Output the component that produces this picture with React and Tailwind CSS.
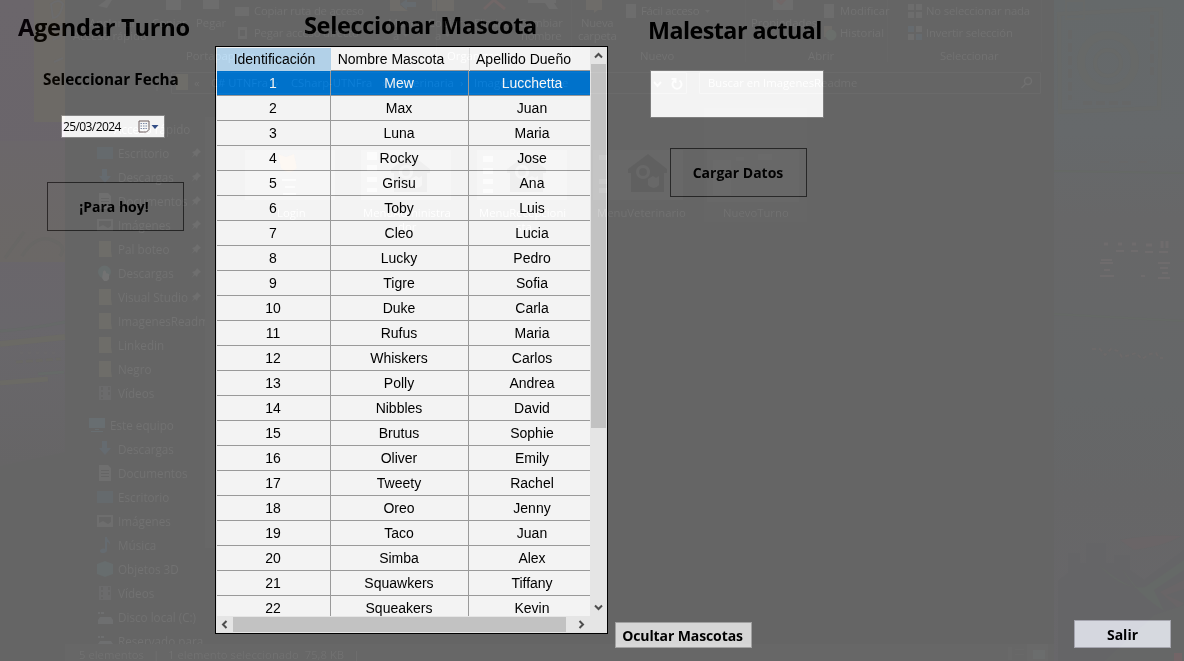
import React from "react";

const pets = [
  ["Mew", "Lucchetta"], ["Max", "Juan"], ["Luna", "Maria"], ["Rocky", "Jose"],
  ["Grisu", "Ana"], ["Toby", "Luis"], ["Cleo", "Lucia"], ["Lucky", "Pedro"],
  ["Tigre", "Sofia"], ["Duke", "Carla"], ["Rufus", "Maria"], ["Whiskers", "Carlos"],
  ["Polly", "Andrea"], ["Nibbles", "David"], ["Brutus", "Sophie"], ["Oliver", "Emily"],
  ["Tweety", "Rachel"], ["Oreo", "Jenny"], ["Taco", "Juan"], ["Simba", "Alex"],
  ["Squawkers", "Tiffany"], ["Squeakers", "Kevin"],
];

const quick = [
  ["Escritorio", "desktop", true], ["Descargas", "down", true], ["Documentos", "doc", true],
  ["Imágenes", "image", true], ["Pal boteo", "folder", true], ["Descargas", "globe", true],
  ["Visual Studio", "folder", true], ["ImagenesReadm", "folder"], ["Linkedin", "folder"],
  ["Negro", "folder"], ["Vídeos", "film"],
];

const computer = [
  ["Descargas", "down"], ["Documentos", "doc"], ["Escritorio", "desktop"], ["Imágenes", "image"],
  ["Música", "music"], ["Objetos 3D", "cube"], ["Vídeos", "film"], ["Disco local (C:)", "disk"],
  ["Reservado para e", "disk"],
];

function Glyph({ kind }) {
  return (
    <svg width="16" height="16" viewBox="0 0 16 16" className="shrink-0">
      {kind === "desktop" && <path d="M0 2h16v12H0z" fill="#000508" />}
      {kind === "down" && <path d="M5 0h5v7h4l-6 7-6-7h3z" fill="#00060b" />}
      {kind === "doc" && <path d="M2 0h9l3 3v13H2zM4 5v1h8V5zM4 8v1h8V8zM4 11v1h8v-1z" fill="#0a0a0a" fillRule="evenodd" />}
      {kind === "image" && <path d="M0 2h16v12H0zM2 4v6l4-2 5 3 3-2V4z" fill="#090909" fillRule="evenodd" />}
      {kind === "folder" && <path d="M2 0h12v10l1 6H2z" fill="#090804" />}
      {kind === "globe" && (
        <g>
          <circle cx="7.500" cy="7" r="6.500" fill="#020808" />
          <path d="M6 7c0-2 3-2 3 0v1l3 1v5l-2 2H7l-2-3z" fill="#0e0e0e" />
        </g>
      )}
      {kind === "film" && <path d="M2 1h12v14H2zM4 2v3h2V2zM4 7v3h2V7zM4 12v2h2v-2zM11 2v3h2V2zM11 7v3h2V7z" fill="#060607" fillRule="evenodd" />}
      {kind === "music" && <path d="M8 0h2c0 3 4 4 3 8-1-3-3-3-3-3v8c0 4-7 4-7 1 0-2 3-3 5-2z" fill="#00060b" />}
      {kind === "cube" && <path d="M0 3l8-3 8 3v10l-8 3-8-3z" fill="#020809" />}
      {kind === "disk" && <path d="M3 8h11l2 3v4H1v-4zM1 3h2v2H1zM4 3h3v2H4z" fill="#090a0b" />}
      {kind === "pc" && <path d="M0 1h16v10H0zM6 12h4v1H6zM2 14h12v1H2z" fill="#03090c" />}
    </svg>
  );
}

function Pin() {
  return (
    <svg width="10" height="10" viewBox="0 0 10 10" className="absolute left-[94px] top-[7px]">
      <path d="M6 0l4 4-1 .5L7 6 6 9 4 7 .5 10 3 6 1 4l3-1 1.500-2z" fill="#0a0a0a" />
    </svg>
  );
}

function SideRow({ item }) {
  return (
    <div className="relative flex h-6 shrink-0 items-center gap-[5px]">
      <Glyph kind={item[1]} />
      <span className="whitespace-nowrap">{item[0]}</span>
      {item[2] && <Pin />}
    </div>
  );
}

function Wallpaper() {
  return (
    <svg width="1184" height="661" className="absolute inset-0">
      <defs>
        <linearGradient id="fadeLeft" x1="0" y1="0" x2="0" y2="1">
          <stop offset="0" stopColor="#060106" />
          <stop offset="0.400" stopColor="#050006" />
          <stop offset="0.700" stopColor="#040206" />
          <stop offset="1" stopColor="#010001" />
        </linearGradient>
        <linearGradient id="fadeRight" x1="0" y1="0" x2="0" y2="1">
          <stop offset="0" stopColor="#000405" />
          <stop offset="0.200" stopColor="#010406" />
          <stop offset="0.330" stopColor="#020203" />
          <stop offset="0.600" stopColor="#000203" />
          <stop offset="0.750" stopColor="#010102" />
          <stop offset="1" stopColor="#030205" />
        </linearGradient>
        <linearGradient id="brown" x1="0" y1="0" x2="0" y2="1">
          <stop offset="0" stopColor="#060205" />
          <stop offset="1" stopColor="#060301" />
        </linearGradient>
        <filter id="soft" x="-10%" y="-50%" width="120%" height="200%"><feGaussianBlur stdDeviation="0.800" /></filter>
      </defs>
      <path d="M0 0h34v122h31v19H0zM0 262h65v190L0 466z" fill="url(#fadeLeft)" />
      <path d="M34 0h31v122H34z" fill="#080501" />
      <path d="M0 141h65v121H0z" fill="url(#brown)" />
      <g fill="none" strokeWidth="3">
        <path d="M51 4q8-6 12 0-3 14-10 14zM54 30l9-4M53 40l9-5M54 62l9-4" stroke="#070708" strokeWidth="2" />
        <path d="M0 331q30-2 65-9" stroke="#010403" />
        <path d="M0 344l65-7" stroke="#060500" strokeWidth="6" />
        <path d="M20 353h35" strokeDasharray="3 5" stroke="#050305" />
        <path d="M16 362l45-3" strokeDasharray="7 3" stroke="#040300" />
        <path d="M0 383l48-4" stroke="#060500" strokeWidth="5" />
        <path d="M38 374l26-2" stroke="#010503" />
        <path d="M5 258L24 232M22 256q14-22 30-16t8 16" stroke="#030200" />
      </g>
      <path d="M1054 0h130v661h-130z" fill="url(#fadeRight)" />
      <g fill="none" stroke="#020403">
        <path d="M1059 14l102-5-2 99-99 4z" strokeWidth="4" />
        <circle cx="1108" cy="62" r="27" strokeWidth="8" />
        <circle cx="1108" cy="63" r="13" strokeWidth="4" />
        <path d="M1070 30v70M1152 15v60M1083 103h50" strokeWidth="4" strokeDasharray="9 4" stroke="#010202" />
        <path d="M1066 1h18v18h-18z" strokeWidth="2" />
        <path d="M1054 171l130 2M1054 314l130 7" stroke="#000401" strokeWidth="2" />
        <path d="M1100 162h58" strokeDasharray="9 10" stroke="#040202" />
      </g>
      <g stroke="#0a0708" strokeWidth="2" fill="none">
        <path d="M1104 244h4M1118 244h4M1132 244h4M1146 245h6M1162 241v7M1167 241v7" strokeWidth="3" />
        <path d="M1116 251h8M1131 251h7M1145 252h8M1159 252h9M1101 260h11M1100 263h13M1104 270h6M1100 276h14M1158 263h12M1160 268h8M1162 273h6M1158 278h12M1141 276h4" />
        <path d="M1092 349h8l5 6 6-6 7 2 4 6 8-2 6-2 6 6 8-5 6-1 3 5h4" strokeDasharray="4 3" stroke="#070404" />
      </g>
      <path d="M1058 661v-80l10-8v-20h12v10h6v-20h20v20h8v-8h16v15l14 10 40-30v121z" fill="#000002" />
      <path d="M1099 565q24 26 46 22l39-27v10l-30 20 10 21q-28-18-42-42l16 20q-18-6-39-24z" fill="#000402" />
      <path d="M1120 540q30-6 62-4-18 10-48 14z" fill="#050002" />
      <path d="M1160 592l24-12v9l-18 6 18 8-5 6z" fill="#040002" />
      <path d="M1104 661l50-46 30-10v56z" fill="#010202" />
      <path d="M1174 653h8v8h-8z" fill="#0e0002" />
    </svg>
  );
}

function RibbonIcons() {
  return (
    <svg width="1184" height="225" className="absolute inset-0">
      <g fill="#080808">
        <path d="M98 6l8-6h6l-5 8zM166 0h15v10h-15zM203 0h16v9h-16z" />
        <path d="M235 7h14v9h-14z" />
        <path d="M238 27h9v12h-9zM240 30v6h5v-6z" fillRule="evenodd" />
        <path d="M626 4h10v14h-10zM705 10h5l-2.500 3zM773 0h20v10h-20zM824 4h10v14h-10z" />
        <path d="M528 0h28v3h-28zM545 3h9l4 6h-9z" />
        <path d="M908 4h6v6h-6zM916 4h6v6h-6zM908 12h6v6h-6zM916 12h6v6h-6z" />
        <path d="M403 34h5l-2.500 3zM445 34h5l-2.500 3z" />
      </g>
      <path d="M390 0h10v5l8 6h-18zM432 0h22v11h-22zM586 0h16v10h-4l-4 3v-3h-8zM824 26h8v11h-8z" fill="#090704" />
      <g fill="#01060a"><path d="M908 26h6v6h-6zM916 34h6v6h-6zM400 4l7-5v3h9v5h-9v3z" /></g>
      <path d="M916 26h6v6h-6zM908 34h6v6h-6z" fill="#090909" />
      <circle cx="831" cy="35" r="5.500" fill="#050906" />
      <path d="M484 9L494 0l11 9M777 0l4 3 5-5" stroke="#0c0202" strokeWidth="3" fill="none" />
      <path d="M176 74h12v16h-12z" fill="#090804" />
      <g fill="none" stroke="#050505">
        <path d="M171.500 72.500h515v21h-515zM699.500 72.500h341v21h-341z" />
        <path d="M436.500 0v62M571.500 0v62M745.500 0v62M887.500 0v62M1041.500 0v62" stroke="#020202" />
        <g stroke="#0b0b0b" strokeWidth="1.500">
          <path d="M86 79l-5 5 5 5M157 91V79l-4 4m4-4l4 4" stroke="#060606" />
          <path d="M654 82l3.500 4 3.500-4M679.500 80.500a4.500 4.500 0 1 1-5 0M675.500 83v-4h-4" strokeWidth="2" />
          <circle cx="1028" cy="81" r="3.500" />
          <path d="M1025.500 84l-4 4" />
        </g>
      </g>
      <g fill="#090909">
        <path d="M245 150h90v50h-90zM361 150h90v50h-90zM477 150h90v50h-90z" opacity="0.300" />
        <path d="M282 179h14v2h-14zM285 186h10v2h-10zM283 193h13v2h-13zM367 152h10v8h-10zM367 165h10v6h-10zM367 177h10v5h-10zM367 188h10v4h-10zM483 156h10v6h-10zM483 168h10v6h-10zM483 179h10v5h-10zM483 189h10v4h-10zM599 155h8v5h-8zM599 179h8v5h-8zM599 188h8v5h-8z" />
        <path d="M281 168l-3-14 8 3 8-3 3 14q-8 8-16 0z" fill="#0a0500" />
        <path d="M593 150h90v50h-90zM707 150h92v52h-92z" opacity="0.300" />
        <path d="M704 108h103v114H704z" opacity="0.120" />
        <path d="M713 160h18v35h-18zM736 157h8v4h-8zM758 154h14v6h-14z" opacity="0.400" />
      </g>
    </svg>
  );
}

/* Thumbnails with a house and two pets, darker than what surrounds them */
function Houses() {
  return (
    <svg width="320" height="46" viewBox="0 0 320 46" className="pointer-events-none absolute left-[390px] top-[150px]">
      {[21, 137, 258].map((x, i) => (
        <g key={i} transform={"translate(" + (x - 20) + " 0)"} opacity={i === 2 ? 0.07 : 0.025}>
          <path
            d="M20 4L39 19v4h-3v19H3V23H0v-4zM15 15a7 7 0 1 0 .1 0zM25 26l3 2 3-2v9q-5 6-11 0v-6z"
            fill="#000"
            fillRule="evenodd"
          />
          <circle cx="15" cy="22" r="4" fill="#000" />
        </g>
      ))}
    </svg>
  );
}

function G({ at, children }) {
  return <span className={"absolute whitespace-pre " + at}>{children}</span>;
}

/* Light of the desktop and file explorer that shows through the translucent form */
function Backdrop() {
  return (
    <div className="pointer-events-none absolute inset-0 overflow-hidden mix-blend-plus-lighter bg-black font-['Open_Sans','Noto_Sans',sans-serif] text-[11.3px] leading-[16px] text-[#0d0d0d]">
      <Wallpaper />
      <RibbonIcons />
      <G at="left-[89px] top-[15px]">Anclar al</G>
      <G at="left-[73px] top-[28px]">Acceso rápido</G>
      <G at="left-[152px] top-[15px]">Copiar</G>
      <G at="left-[196px] top-[15px]">Pegar</G>
      <G at="left-[254px] top-[3px] tracking-[-0.2px]">Copiar ruta de acceso</G>
      <G at="left-[254px] top-[25px] tracking-[-0.2px]">Pegar acceso directo</G>
      <G at="left-[186px] top-[48px]">Portapapeles</G>
      <G at="left-[388px] top-[15px]">Mover</G>
      <G at="left-[393px] top-[28px]">a</G>
      <G at="left-[428px] top-[15px]">Copiar</G>
      <G at="left-[435px] top-[28px]">a</G>
      <G at="left-[474px] top-[15px] tracking-[-0.3px]">Eliminar</G>
      <G at="left-[519px] top-[15px] tracking-[-0.1px]">Cambiar</G>
      <G at="left-[521px] top-[28px] tracking-[-0.3px]">nombre</G>
      <G at="left-[447px] top-[48px]">Organizar</G>
      <G at="left-[581px] top-[15px] tracking-[-0.3px]">Nueva</G>
      <G at="left-[578px] top-[28px] tracking-[-0.2px]">carpeta</G>
      <G at="left-[641px] top-[3px] tracking-[-0.3px]">Fácil acceso</G>
      <G at="left-[640px] top-[48px]">Nuevo</G>
      <G at="left-[751px] top-[15px]">Propiedades</G>
      <G at="left-[840px] top-[3px]">Modificar</G>
      <G at="left-[840px] top-[25px]">Historial</G>
      <G at="left-[808px] top-[48px]">Abrir</G>
      <G at="left-[926px] top-[3px] tracking-[-0.15px]">No seleccionar nada</G>
      <G at="left-[926px] top-[25px] tracking-[-0.15px]">Invertir selección</G>
      <G at="left-[940px] top-[48px] tracking-[-0.15px]">Seleccionar</G>
      <G at="left-[194px] top-[75px]">{"«"}</G>
      <G at="left-[211px] top-[75px]">C# UTNFra</G>
      <G at="left-[275px] top-[75px]">{"›"}</G>
      <G at="left-[291px] top-[75px]">CSharp-UTNFra</G>
      <G at="left-[382px] top-[75px]">{"›"}</G>
      <G at="left-[396px] top-[75px]">Veterinaria</G>
      <G at="left-[460px] top-[75px]">{"›"}</G>
      <G at="left-[474px] top-[75px]">ImagenesReadme</G>
      <G at="left-[708px] top-[75px]">Buscar en ImagenesReadme</G>
      <G at="left-[277px] top-[205px]">Login</G>
      <G at="left-[363px] top-[205px]">MenuAdministra</G>
      <G at="left-[398px] top-[219px]">dor</G>
      <G at="left-[479px] top-[205px]">MenuRecepcioni</G>
      <G at="left-[516px] top-[219px]">sta</G>
      <G at="left-[597px] top-[205px]">MenuVeterinario</G>
      <G at="left-[723px] top-[205px]">NuevoTurno</G>
      <div className="absolute left-[205px] top-[117px] h-[431px] w-[11px] bg-[#020202]" />
      <div className="absolute left-[65px] top-[117px] flex h-[527px] w-[140px] flex-col overflow-hidden text-[11.7px]">
        <div className="flex h-6 shrink-0 items-center pl-[49px]">Acceso rápido</div>
        <div className="pl-8">
          {quick.map((q, i) => <SideRow key={i} item={q} />)}
        </div>
        <div className="mt-2 flex h-6 shrink-0 items-center gap-[5px] pl-6">
          <Glyph kind="pc" />Este equipo
        </div>
        <div className="pl-8">
          {computer.map((q, i) => <SideRow key={i} item={q} />)}
        </div>
      </div>
      <div className="absolute left-[65px] top-[644px] flex h-[17px] w-[989px] gap-[9px] bg-[#020202] pl-[14px] pt-[3px]">
        <span>5 elementos</span><span>|</span><span>1 elemento seleccionado&nbsp; 75,8 KB</span><span>|</span>
      </div>
      <svg width="40" height="18" className="absolute left-[1008px] top-[643px]">
        <path d="M0 4h4v13H0zM7 6h9v1H7zM7 11h9v1H7zM19 1h21v17H19z" fill="#040404" />
        <path d="M25 7h12v9H25z" fill="#060808" />
      </svg>
    </div>
  );
}

function Arrow({ d }) {
  return (
    <svg width="9" height="9" viewBox="0 0 9 9">
      <path d={d} fill="none" stroke="#4d4d4d" strokeWidth="2" />
    </svg>
  );
}

function PetTable() {
  return (
    <div className="flex h-[588px] w-[393px] flex-col border border-black bg-[#e5e5e5]">
      <div className="flex h-[569px] pl-px">
        <div className="h-[569px] w-[373px] overflow-hidden bg-[#f3f3f3] text-[14px] text-black">
          <div className="grid h-6 grid-cols-[114px_138px_121px] border-b border-[#999] pt-px text-center leading-[23px]">
            <div className="bg-[#b2d1e8] pl-px">Identificación</div>
            <div className="pr-[18px]">Nombre Mascota</div>
            <div className="border-l border-[#dcdcdc] pr-[13px]">Apellido Dueño</div>
          </div>
          {pets.map((p, i) => (
            <div
              key={i}
              className={
                "grid h-[25px] grid-cols-[114px_138px_121px] border-b border-[#999] text-center leading-[25px] " +
                (i === 0 ? "bg-[#0072cb] text-[#f2f2f2]" : "")
              }
            >
              <div className="border-r border-[#999] pr-px">{i + 1}</div>
              <div className="border-r border-[#999] pr-px">{p[0]}</div>
              <div className="pl-[5px]">{p[1]}</div>
            </div>
          ))}
        </div>
        <div className="flex h-[569px] w-4 flex-col items-center">
          <div className="flex h-[17px] items-center"><Arrow d="M1 6.500L4.500 3 8 6.500" /></div>
          <div className="h-[364px] w-[15px] bg-[#c2c2c2]" />
          <div className="flex-1" />
          <div className="flex h-[17px] items-center"><Arrow d="M1 2.500L4.500 6 8 2.500" /></div>
        </div>
      </div>
      <div className="flex h-[17px] items-center">
        <div className="flex w-[17px] justify-center"><Arrow d="M6.500 1L3 4.500 6.500 8" /></div>
        <div className="h-[15px] w-[333px] bg-[#c2c2c2]" />
        <div className="flex w-[31px] justify-center"><Arrow d="M2.500 1L6 4.500 2.500 8" /></div>
      </div>
    </div>
  );
}

export default function App() {
  return (
    <div className="relative isolate flex h-[661px] w-[1184px] overflow-hidden bg-[#656565] font-['Liberation_Sans',sans-serif] text-black">
      <section className="flex w-[215px] flex-col font-['Open_Sans','Noto_Sans',sans-serif] font-bold">
        <h1 className="mt-3 whitespace-nowrap pl-[18px] text-[23.6px] leading-[30px] tracking-[-0.25px]">Agendar Turno</h1>
        <h2 className="mt-[27px] whitespace-nowrap pl-[43px] text-[15.3px] leading-[20px]">Seleccionar Fecha</h2>
        <div className="ml-[61px] mt-[26px] flex h-[23px] w-[104px] items-center border border-[#858585] bg-[#f3f3f3] pl-px font-normal">
          <span className="w-[75px] text-[12px] tracking-[-0.6px]">25/03/2024</span>
          <svg width="22" height="14" viewBox="0 0 22 14">
            <path d="M1 1h10v8.500L8.500 12H1z" fill="#f4f4f4" stroke="#6c5d5d" />
            <path d="M2.500 3.500h7M2.500 6h7M2.500 8.500h7" stroke="#7e8ba8" strokeDasharray="1.500 1" />
            <path d="M13.500 5h7L17 9z" fill="#344f87" />
          </svg>
        </div>
        <button className="ml-[47px] mt-[44px] h-[49px] w-[137px] border border-[#262626] pr-[3px] text-[14px]">¡Para hoy!</button>
      </section>

      <section className="flex w-[400px] flex-col">
        <h1 className="mt-[10px] h-[36px] whitespace-nowrap pl-[89px] font-['Open_Sans','Noto_Sans',sans-serif] text-[23.5px] font-bold leading-[30px] tracking-[-0.33px]">Seleccionar Mascota</h1>
        <PetTable />
      </section>

      <section className="flex flex-1 flex-col font-['Open_Sans','Noto_Sans',sans-serif] font-bold">
        <h1 className="mt-[15px] whitespace-nowrap pl-[33px] text-[23.3px] leading-[30px] tracking-[-0.54px]">Malestar actual</h1>
        <div className="ml-[35px] mt-[25px] h-[48px] w-[174px] border border-[#7d7d7d] bg-[#f3f3f3]" />
        <button className="ml-[55px] mt-[30px] h-[49px] w-[137px] border border-[#262626] pr-px text-[14px]">Cargar Datos</button>
        <div className="mb-[13px] mt-auto flex items-end justify-between pr-[13px]">
          <button className="h-[26px] w-[137px] whitespace-nowrap border border-[#a0a0a0] bg-[#d6d6d6] pt-px pr-0.5 text-[14px] leading-[23px] tracking-[-0.1px]">Ocultar Mascotas</button>
          <button className="h-[28px] w-[97px] border border-[#a5a5ad] bg-[#d5d7dd] text-[14px]">Salir</button>
        </div>
      </section>

      <Houses />
      <Backdrop />
    </div>
  );
}
